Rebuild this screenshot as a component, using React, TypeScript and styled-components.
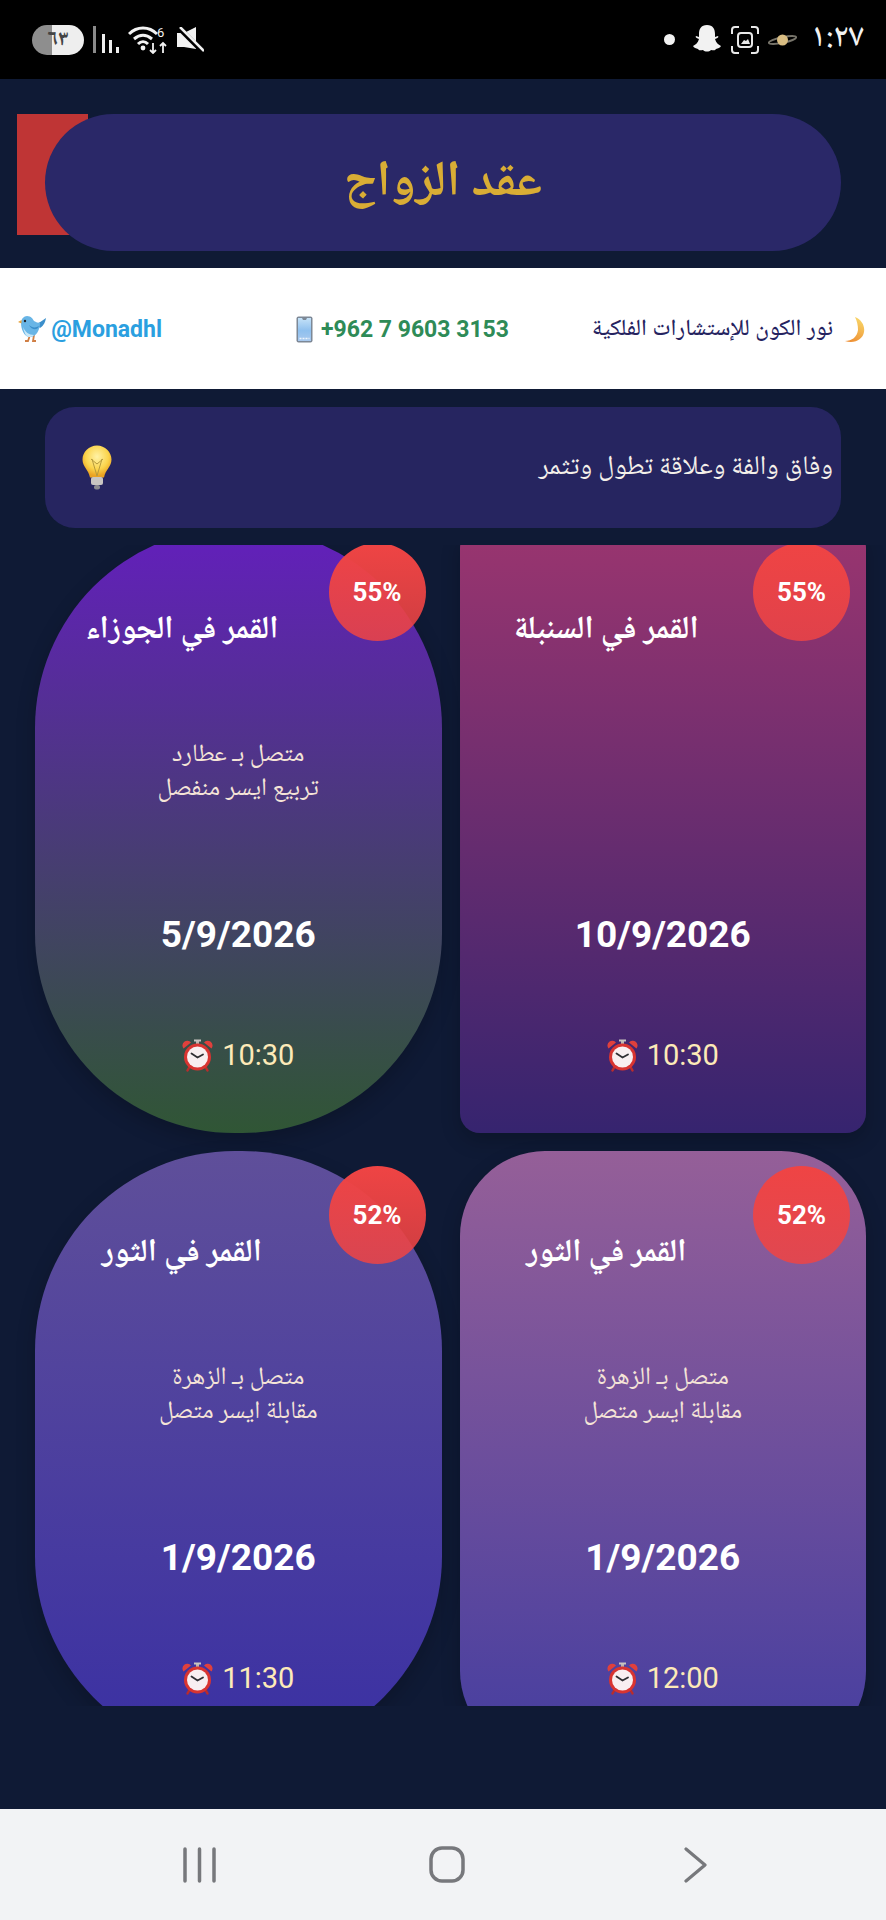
import React from "react";
import styled, { createGlobalStyle } from "styled-components";

const ARABIC = `"Noto Naskh Arabic", "Noto Sans Arabic", "DejaVu Sans", sans-serif`;

type Shape = "pill" | "square" | "soft";

type Reading = {
  percent: string;
  title: string;
  aspects: string[];
  date: string;
  time: string;
  shape: Shape;
  from: string;
  to: string;
};

const readings: Reading[] = [
  {
    percent: "55%",
    title: "القمر في السنبلة",
    aspects: [],
    date: "10/9/2026",
    time: "10:30",
    shape: "square",
    from: "#9a356f",
    to: "#36246f",
  },
  {
    percent: "55%",
    title: "القمر في الجوزاء",
    aspects: ["متصل بـ عطارد", "تربيع ايسر منفصل"],
    date: "5/9/2026",
    time: "10:30",
    shape: "pill",
    from: "#631fbc",
    to: "#305635",
  },
  {
    percent: "52%",
    title: "القمر في الثور",
    aspects: ["متصل بـ الزهرة", "مقابلة ايسر متصل"],
    date: "1/9/2026",
    time: "12:00",
    shape: "soft",
    from: "#955f98",
    to: "#453ea0",
  },
  {
    percent: "52%",
    title: "القمر في الثور",
    aspects: ["متصل بـ الزهرة", "مقابلة ايسر متصل"],
    date: "1/9/2026",
    time: "11:30",
    shape: "pill",
    from: "#5f4f9a",
    to: "#3a30a3",
  },
];

function AlarmIcon() {
  return (
    <svg width="31" height="33" viewBox="0 0 31 33">
      <path d="M1.5 9.5a4.8 4.8 0 0 1 7.5-6zM29.500 9.500a4.800 4.800 0 0 0-7.500-6z" fill="#e0403c" />
      <path d="M15.500 1v4" stroke="#b9b4b0" strokeWidth="3" />
      <path d="M12 1.500h7" stroke="#c9c4c0" strokeWidth="2" />
      <path d="M7.500 28l-2 3.500M23.500 28l2 3.500" stroke="#b92c2c" strokeWidth="2.500" strokeLinecap="round" />
      <circle cx="15.500" cy="18" r="13.500" fill="#d83431" />
      <circle cx="15.500" cy="18" r="10.500" fill="#f8eff1" />
      <path d="M9.500 14.500l6 4 5.500-3" fill="none" stroke="#2f2f33" strokeWidth="1.800" strokeLinecap="round" />
    </svg>
  );
}

function MoonIcon() {
  return (
    <svg width="20" height="26" viewBox="0 0 20 26">
      <defs>
        <linearGradient id="moon" x1="0.700" y1="0" x2="0.300" y2="1">
          <stop offset="0%" stopColor="#f8d668" />
          <stop offset="100%" stopColor="#ee8f33" />
        </linearGradient>
      </defs>
      <path d="M10 0c7 3 10 9 9 15-1 7-9 12-19 9 7 0 12-4 13-11 0-5-1-9-3-13z" fill="url(#moon)" />
    </svg>
  );
}

function PhoneIcon() {
  return (
    <svg width="17" height="27" viewBox="0 0 17 27">
      <defs>
        <linearGradient id="screen" x1="0" y1="0" x2="0" y2="1">
          <stop offset="0%" stopColor="#c5e2f8" />
          <stop offset="55%" stopColor="#8fc0ee" />
          <stop offset="100%" stopColor="#a9c9ee" />
        </linearGradient>
      </defs>
      <rect x="0.500" y="0.500" width="16" height="26" rx="2" fill="#7d8896" />
      <rect x="2" y="2" width="13" height="23" fill="url(#screen)" />
      <path d="M6 2h5l-1 2H7z" fill="#7d8896" />
      <path d="M3.500 22.500h10" stroke="#eef5fc" strokeWidth="1.500" strokeDasharray="2 1" />
    </svg>
  );
}

function BirdIcon() {
  return (
    <svg width="28" height="27" viewBox="0 0 28 27">
      <path d="M12 19l-2 6h-3M16 19l-1 6h3" fill="none" stroke="#d07f45" strokeWidth="1.800" />
      <path d="M28 2c-1 5-2 7-6 10l-4-4c3-1 6-3 10-6z" fill="#3b8fcb" />
      <path d="M3 7c0-4 3-7 6-7 4 0 6 3 7 5 2 1 4 2 6 2 0 7-4 14-10 14C6 21 3 13 3 7z" fill="#68b5e6" />
      <path d="M5 11c2 5 6 8 11 8-2 2-4 2-5 2-3 0-5-5-6-10z" fill="#c9e8f8" />
      <path d="M11 9c3 3 7 3 10 1-1 4-7 5-10-1z" fill="#3b8fcb" />
      <circle cx="7" cy="5" r="1.200" fill="#20242c" />
      <path d="M0 6l3.500-2v3.500z" fill="#e7a33c" />
    </svg>
  );
}

function BulbIcon() {
  return (
    <svg width="30" height="45" viewBox="0 0 30 45">
      <defs>
        <radialGradient id="bulb" cx="50%" cy="35%" r="60%">
          <stop offset="0%" stopColor="#fff2a6" />
          <stop offset="65%" stopColor="#fbd44c" />
          <stop offset="100%" stopColor="#eba322" />
        </radialGradient>
      </defs>
      <path d="M15 0.500C7 0.500 0.500 7 0.500 14.500c0 7 6 10 7.500 18h14c1.500-8 7.500-11 7.500-18C29.500 7 23 0.500 15 0.500z" fill="url(#bulb)" />
      <path d="M9 14l6 5 6-5M10 14l5 17 5-17" fill="none" stroke="#b69a3c" strokeWidth="1" />
      <rect x="9" y="32" width="12" height="8" rx="2" fill="#c9c6c2" />
      <rect x="12" y="40" width="6" height="4.500" rx="2" fill="#8b8b90" />
    </svg>
  );
}

function SignalIcon() {
  return (
    <svg width="26" height="27" viewBox="0 0 26 27">
      <rect x="0" y="0" width="3" height="27" fill="#8a8a8a" />
      <rect x="9" y="8" width="3" height="19" fill="#eee" />
      <rect x="16" y="14" width="3" height="13" fill="#eee" />
      <rect x="23" y="21" width="3" height="6" fill="#eee" />
    </svg>
  );
}

function WifiIcon() {
  return (
    <svg width="40" height="28" viewBox="0 0 40 28" fill="none" stroke="#f2f2f2" strokeWidth="3">
      <path d="M1 8c8-8 20-8 28 0M6 13c6-5 12-5 18 0M10 18c3-3 7-3 10 0" />
      <circle cx="15" cy="22" r="2.400" fill="#f2f2f2" stroke="none" />
      <path d="M25 17v10M22 24l3 3 3-3M35 27V17M32 20l3-3 3 3" strokeWidth="1.800" />
      <text x="29" y="11" fill="#f2f2f2" stroke="none" fontSize="13" fontFamily="Roboto, sans-serif">6</text>
    </svg>
  );
}

function MuteIcon() {
  return (
    <svg width="27" height="26" viewBox="0 0 27 26">
      <path d="M0 6h7l12-6v22L7 20H0z" fill="#f2f2f2" />
      <path d="M2 1l24 24" stroke="#000" strokeWidth="5" />
      <path d="M3 0l24 24" stroke="#f2f2f2" strokeWidth="2.500" />
    </svg>
  );
}

function GhostIcon() {
  return (
    <svg width="30" height="29" viewBox="0 0 30 29">
      <path
        d="M15 0c6 0 8 4 8 9v3l3-1c1 1 0 2-3 3 1 4 4 6 6 7-1 2-3 2-5 3-1 2-3 1-5 1-2 2-6 2-8 0-2 0-4 1-5-1-2-1-4-1-5-3 2-1 5-3 6-7-3-1-4-2-3-3l3 1V9c0-5 2-9 8-9z"
        fill="#f2f2f2"
      />
    </svg>
  );
}

function CaptureIcon() {
  return (
    <svg width="28" height="28" viewBox="0 0 28 28" fill="none" stroke="#e8e8e8" strokeWidth="2">
      <path d="M8 1H4a3 3 0 0 0-3 3v4M20 1h4a3 3 0 0 1 3 3v4M8 27H4a3 3 0 0 1-3-3v-4M20 27h4a3 3 0 0 0 3-3v-4" />
      <rect x="7" y="7" width="14" height="14" rx="3" />
      <path d="M10 18l3-4 2 1 2-2 2 5z" fill="#e8e8e8" stroke="none" />
    </svg>
  );
}

function SaturnIcon() {
  return (
    <svg width="29" height="16" viewBox="0 0 29 16">
      <ellipse cx="14.500" cy="8" rx="14" ry="2.800" fill="none" stroke="#77746a" strokeWidth="1.800" transform="rotate(-12 14.500 8)" />
      <circle cx="14.500" cy="8" r="5.500" fill="#d9bd83" />
    </svg>
  );
}

function App() {
  return (
    <Page>
      <GlobalStyle />
      <StatusBar>
        <StatusGroup>
          <Battery>٦٣</Battery>
          <SignalIcon />
          <WifiIcon />
          <MuteIcon />
        </StatusGroup>
        <StatusGroup>
          <Dot />
          <GhostIcon />
          <CaptureIcon />
          <SaturnIcon />
          <Clock>١:٢٧</Clock>
        </StatusGroup>
      </StatusBar>

      <Content>
        <HeaderZone>
          <BackTab />
          <TitlePill>عقد الزواج</TitlePill>
        </HeaderZone>

        <Banner>
          <BannerItem $color="#25235f" $gap={12} $weight={500}>
            <MoonIcon />
            نور الكون للإستشارات الفلكية
          </BannerItem>
          <BannerItem $color="#2e8b57" $gap={8} $weight={700}>
            <span dir="ltr">+962 7 9603 3153</span>
            <PhoneIcon />
          </BannerItem>
          <BannerItem $color="#2b9fe0" $gap={5} $weight={700}>
            <span dir="ltr">@Monadhl</span>
            <BirdIcon />
          </BannerItem>
        </Banner>

        <TipCard>
          <TipText>وفاق والفة وعلاقة تطول وتثمر</TipText>
          <BulbIcon />
        </TipCard>

        <CardViewport>
          <CardGrid>
            {readings.map((r, i) => (
              <Card key={i} $shape={r.shape} $from={r.from} $to={r.to}>
                <Badge>{r.percent}</Badge>
                <CardTitle>{r.title}</CardTitle>
                <Aspects>
                  {r.aspects.map((a, j) => (
                    <React.Fragment key={a}>
                      {j > 0 && <br />}
                      {a}
                    </React.Fragment>
                  ))}
                </Aspects>
                <DateText>{r.date}</DateText>
                <TimeRow>
                  <AlarmIcon />
                  {r.time}
                </TimeRow>
              </Card>
            ))}
          </CardGrid>
        </CardViewport>
      </Content>

      <NavBar>
        <svg width="33" height="36" viewBox="0 0 33 36" stroke="#77787c" strokeWidth="3.500" strokeLinecap="round">
          <path d="M2 2v32M16.500 2v32M31 2v32" />
        </svg>
        <svg width="36" height="37" viewBox="0 0 36 37" fill="none" stroke="#77787c" strokeWidth="3.500">
          <rect x="2" y="2" width="32" height="33" rx="11" />
        </svg>
        <svg width="23" height="36" viewBox="0 0 23 36" fill="none" stroke="#77787c" strokeWidth="3.200" strokeLinecap="round" strokeLinejoin="round">
          <path d="M2 2l19 16L2 34" />
        </svg>
      </NavBar>
    </Page>
  );
}

export default App;

const GlobalStyle = createGlobalStyle`
  html, body {
    margin: 0;
    padding: 0;
    background: #0f1a35;
  }
  * {
    box-sizing: border-box;
  }
`;

const Page = styled.div`
  width: 886px;
  height: 1920px;
  display: flex;
  flex-direction: column;
  font-family: Roboto, ${ARABIC};
  overflow: hidden;
`;

const StatusBar = styled.div`
  height: 79px;
  flex: none;
  background: #000;
  color: #f2f2f2;
  display: flex;
  align-items: center;
  justify-content: space-between;
  padding: 0 22px 0 32px;
`;

const StatusGroup = styled.div`
  display: flex;
  align-items: center;
  gap: 9px;
`;

const Battery = styled.div`
  width: 52px;
  height: 30px;
  border-radius: 15px;
  background: linear-gradient(90deg, #8e8e8e 0 38%, #eeeeee 38%);
  color: #444;
  font: 700 22px ${ARABIC};
  display: flex;
  align-items: center;
  justify-content: center;
`;

const Dot = styled.div`
  width: 11px;
  height: 11px;
  border-radius: 50%;
  background: #f2f2f2;
  margin-right: 8px;
`;

const Clock = styled.div`
  font: 500 33px/1 ${ARABIC};
  margin-left: 5px;
`;

const Content = styled.div`
  flex: 1;
  min-height: 0;
  background: #0f1a35;
  display: flex;
  flex-direction: column;
`;

const HeaderZone = styled.div`
  position: relative;
  height: 189px;
  flex: none;
  padding: 35px 45px 0;
`;

const BackTab = styled.div`
  position: absolute;
  left: 17px;
  top: 35px;
  width: 71px;
  height: 121px;
  background: #bf3535;
`;

const TitlePill = styled.div`
  position: relative;
  height: 137px;
  border-radius: 69px;
  background: #2a2868;
  color: #d9ad35;
  font: 700 50px ${ARABIC};
  display: flex;
  align-items: center;
  justify-content: center;
  padding-top: 3px;
`;

const Banner = styled.div`
  height: 121px;
  flex: none;
  background: #fff;
  display: grid;
  grid-template-columns: 356px 347px 1fr;
  align-items: center;
  padding: 2px 21px 0 17px;
  direction: rtl;
`;

const BannerItem = styled.div<{ $color: string; $gap: number; $weight: number }>`
  display: flex;
  align-items: center;
  gap: ${(p) => p.$gap}px;
  color: ${(p) => p.$color};
  font: ${(p) => p.$weight} 23px Roboto, ${ARABIC};
  white-space: nowrap;
`;

const TipCard = styled.div`
  margin: 18px 45px 0;
  height: 121px;
  flex: none;
  border-radius: 30px;
  background: #262560;
  display: flex;
  align-items: center;
  justify-content: space-between;
  padding: 0 8px 0 37px;
  direction: rtl;
`;

const TipText = styled.div`
  color: #f4f0ea;
  font: 400 27px ${ARABIC};
`;

const CardViewport = styled.div`
  margin-top: 17px;
  height: 1161px;
  flex: none;
  overflow: hidden;
`;

const CardGrid = styled.div`
  margin: -17px 20px 0 35px;
  display: grid;
  grid-template-columns: 1fr 1fr;
  gap: 18px;
  direction: rtl;
`;

const radius: Record<Shape, string> = {
  pill: "200px",
  square: "20px",
  soft: "85px",
};

const Card = styled.div<{ $shape: Shape; $from: string; $to: string }>`
  position: relative;
  height: 605px;
  border-radius: ${(p) => radius[p.$shape]};
  background: linear-gradient(180deg, ${(p) => p.$from}, ${(p) => p.$to});
  box-shadow: 0 8px 20px rgba(0, 0, 0, 0.2);
  color: #fff;
  display: flex;
  flex-direction: column;
  align-items: center;
  padding-top: 87px;
`;

const Badge = styled.div`
  position: absolute;
  top: 15px;
  right: 16px;
  width: 97px;
  height: 98px;
  border-radius: 50%;
  background: linear-gradient(180deg, #ef4444, rgba(239, 68, 68, 0.85));
  color: #fff;
  font: 700 26px Roboto, sans-serif;
  display: flex;
  align-items: center;
  justify-content: center;
`;

const CardTitle = styled.div`
  width: 100%;
  height: 32px;
  padding-right: 113px;
  text-align: center;
  font: 700 32px/32px ${ARABIC};
  color: #fff;
  direction: rtl;
  white-space: nowrap;
`;

const Aspects = styled.div`
  margin-top: 92px;
  height: 68px;
  text-align: center;
  color: #f5e4d7;
  font: 400 25px/34px ${ARABIC};
  direction: rtl;
`;

const DateText = styled.div`
  margin-top: 107px;
  font: 700 37px/42px Roboto, sans-serif;
`;

const TimeRow = styled.div`
  margin-top: 81px;
  display: flex;
  align-items: center;
  gap: 9px;
  color: #fdeab8;
  font: 400 29px/36px Roboto, sans-serif;
  direction: ltr;
`;

const NavBar = styled.div`
  height: 111px;
  flex: none;
  background: #f2f3f5;
  display: grid;
  grid-template-columns: 246px 255px 1fr;
  align-items: center;
  padding-left: 183px;
`;
